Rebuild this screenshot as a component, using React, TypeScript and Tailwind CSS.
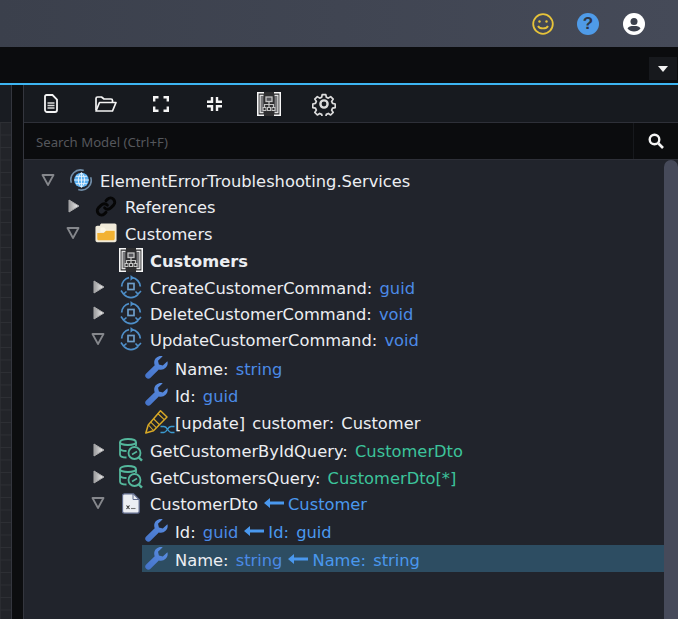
import React from "react";

const BLUE = "text-[#4b8ae6]";
const LINK = "text-[#4a98ee]";
const GREEN = "text-[#3cc39b]";

// tree icons
function Expanded() {
  return (
    <svg width="14" height="12" viewBox="0 0 14 12" fill="none">
      <path d="M1.500 1h11L7 11z" stroke="#85878c" strokeWidth="1.800" strokeLinejoin="round" />
    </svg>
  );
}

function Collapsed() {
  return (
    <svg width="12" height="14" viewBox="0 0 12 14" className="ml-[2px]">
      <defs>
        <linearGradient id="arrowFill" x1="0" x2="1" y1="0" y2="0">
          <stop offset="0" stopColor="#9a9a9c" />
          <stop offset="1" stopColor="#f4f4f4" />
        </linearGradient>
      </defs>
      <path d="M1 1v12l10-6z" fill="url(#arrowFill)" stroke="#a8a8aa" strokeWidth="1" strokeLinejoin="round" />
    </svg>
  );
}

function ServiceIcon() {
  return (
    <svg width="24" height="24" viewBox="0 0 24 24" fill="none">
      <path d="M1.500 15A10.500 10.500 0 0 1 15 1.700" stroke="#6f8ba5" strokeWidth="1.800" />
      <path d="M22.500 9A10.500 10.500 0 0 1 9 22.300" stroke="#6f8ba5" strokeWidth="1.800" />
      <circle cx="12.500" cy="12" r="8" fill="#5cb1f2" />
      <path d="M4.500 12h16M12.500 4v16M6.500 8h12M6.500 16h12M12.500 4c-4.500 4-4.500 12 0 16M12.500 4c4.500 4 4.500 12 0 16" stroke="#e8f4fd" strokeWidth="1" />
    </svg>
  );
}

function LinkIcon() {
  return (
    <svg width="25" height="25" viewBox="0 0 24 24" fill="none" stroke="#060606" strokeWidth="3.200" strokeLinecap="round">
      <path d="M10.500 13.500a4.500 4.500 0 0 0 6.600.2l3.200-3.200a4.600 4.600 0 0 0-6.500-6.500l-1.800 1.800" />
      <path d="M13.500 10.500a4.500 4.500 0 0 0-6.600-.2l-3.200 3.200a4.600 4.600 0 0 0 6.500 6.500l1.800-1.800" />
    </svg>
  );
}

function FolderIcon() {
  return (
    <svg width="24" height="22" viewBox="0 0 24 22">
      <path d="M2.500 21C1.200 21 .5 20 .5 19V5c0-1.200.8-2 2-2h3V2.500C5.500 1.200 6.500.5 7.500.5h14c1.200 0 2 .8 2 2V19c0 1.200-.8 2-2 2z" fill="#f0ead9" />
      <path d="M6 5h4l2 2.500h9.500V10H6z" fill="#fbf5e4" />
      <path d="M2.500 11h7l2.500-2.500h9.500V17c0 1-.7 2-2 2H4c-1 0-1.500-.7-1.500-2z" fill="#f2b233" />
    </svg>
  );
}

function ModelIcon() {
  return (
    <svg width="24" height="24" viewBox="0 0 24 24" fill="none" className="shrink-0">
      <rect width="24" height="24" fill="#2e2e30" />
      <path d="M7 .8H.8v22.400H7M17 .8h6.200v22.400H17" stroke="#f6f6f6" strokeWidth="1.600" />
      <path d="M6.500 3.500H3.200v17h3.300M17.500 3.500h3.300v17h-3.300" stroke="#e0e0e0" strokeWidth="1.400" />
      <rect x="3.800" y="4.200" width="2.600" height="15.600" fill="#77777a" />
      <rect x="17.600" y="4.200" width="2.600" height="15.600" fill="#77777a" />
      <rect x="9" y="5" width="6" height="4.500" fill="#55555a" stroke="#c4c4c4" strokeWidth="1.300" />
      <path d="M12 9.500v3M7.500 15.500v-3h9v3M12 12.500v3" stroke="#c4c4c4" strokeWidth="1.200" />
      <rect x="6" y="15.500" width="3" height="3" stroke="#c4c4c4" />
      <rect x="10.500" y="15.500" width="3" height="3" stroke="#c4c4c4" />
      <rect x="15" y="15.500" width="3" height="3" stroke="#c4c4c4" />
    </svg>
  );
}

function CommandIcon() {
  return (
    <svg width="22" height="24" viewBox="0 0 22 24" fill="none" stroke="#4e8fc9" strokeWidth="1.800" className="shrink-0">
      <path d="M1.700 11.500A9.500 9.500 0 0 1 9 2.700" />
      <path d="M12 2.600a9.500 9.500 0 0 1 8.300 8.900" />
      <path d="M10.500 0l3.500 2.700-3.500 3z" fill="#4e8fc9" stroke="none" />
      <path d="M1 15.500l2.500 3.500 3-2.500M21 16l-3 3-2.500-2.500" strokeWidth="1.600" />
      <path d="M4 19.500A9.500 9.500 0 0 0 18 19.500" />
      <rect x="8" y="8.500" width="6" height="6" stroke="#6d9dc8" strokeWidth="1.700" />
    </svg>
  );
}

function WrenchIcon() {
  return (
    <svg width="23" height="23" viewBox="0 0 23 23" className="shrink-0">
      <defs>
        <linearGradient id="wrenchFill" x1="0" x2="1" y1="1" y2="0">
          <stop offset="0" stopColor="#4472c8" />
          <stop offset="1" stopColor="#5c90e4" />
        </linearGradient>
      </defs>
      <path
        d="M22.400 5.200l-4.600 4.300-3.900-.9-.9-3.900L17.700.2c-3.700-.9-8.400 1.300-8.500 6.300 0 1 .2 1.900.5 2.700L1.200 17.500c-1.400 1.400-1.400 3 0 4.300s3 1.300 4.300 0l8.300-8.400c4.800 1.700 10.100-2.700 8.600-8.200z"
        fill="url(#wrenchFill)"
      />
    </svg>
  );
}

function PencilIcon() {
  return (
    <svg width="30" height="24" viewBox="0 0 30 24" fill="none" className="ml-[8px] shrink-0">
      <path d="M.8 23l2.400-8L15.500.8l6.500 6.200L8.500 20.800z" stroke="#d9a926" strokeWidth="1.500" strokeLinejoin="round" />
      <path d="M12.800 3.500l6.500 6.200M3.500 15l5 5.500M5.800 12.200l5.500 5.500M8.800 9l5.500 5.500" stroke="#d9a926" strokeWidth="1.100" />
      <path d="M15.500 22.500h3.500c3 0 3.500-6 7-6h3.500M15.500 16.500h3.500c3.500 0 4 6 7 6h3.500" stroke="#3c9ad0" strokeWidth="1.300" />
    </svg>
  );
}

function QueryIcon() {
  return (
    <svg width="24" height="24" viewBox="0 0 24 24" fill="none" stroke="#54b79c" strokeWidth="1.800" className="-ml-[1px] shrink-0">
      <ellipse cx="9" cy="4" rx="8" ry="3" />
      <path d="M1 4v12.500c0 1.800 2.800 3 6.500 3M17 4v4M1 10c0 1.800 2.800 3 6.500 3" />
      <circle cx="15.500" cy="15" r="6" fill="#21242c" />
      <path d="M13 16.500l5-3" strokeWidth="1.500" />
      <path d="M19.800 19.500l3.200 3.200" strokeWidth="2.400" />
    </svg>
  );
}

function DtoIcon() {
  return (
    <svg width="18" height="21" viewBox="0 0 18 21" fill="none" className="shrink-0">
      <path d="M2.500.8h9l5.700 5.700v11.700a2 2 0 0 1-2 2H2.500a2 2 0 0 1-2-2V2.800a2 2 0 0 1 2-2z" fill="#eceef3" stroke="#5f6a8c" strokeWidth="1.300" />
      <path d="M11 1v5.500h6" stroke="#5f6a8c" strokeWidth="1" />
      <path d="M4.500 12.500l3 3.500M7.500 12.500l-3 3.500" stroke="#333" strokeWidth="1.100" />
      <path d="M9 15.500h4.500" stroke="#777" strokeWidth="1.100" />
    </svg>
  );
}

function MapArrow() {
  return (
    <svg width="21" height="12" viewBox="0 0 21 12" className="ml-[5px] mr-[4px] inline-block align-[1px]">
      <path d="M7 1L1 6l6 5V7.500h14v-3H7z" fill="#4a98ee" />
    </svg>
  );
}

type Row = {
  depth: number;
  h: number;
  arrow?: "open" | "closed";
  icon: React.ReactNode;
  selected?: boolean;
  text: React.ReactNode;
};

const rows: Row[] = [
  { depth: 0, h: 27, arrow: "open", icon: <ServiceIcon />, text: "ElementErrorTroubleshooting.Services" },
  { depth: 1, h: 26, arrow: "closed", icon: <LinkIcon />, text: "References" },
  { depth: 1, h: 27, arrow: "open", icon: <FolderIcon />, text: "Customers" },
  { depth: 2, h: 27, icon: <ModelIcon />, text: <b className="font-bold">Customers</b> },
  { depth: 2, h: 27, arrow: "closed", icon: <CommandIcon />, text: <>CreateCustomerCommand: <span className={BLUE}>guid</span></> },
  { depth: 2, h: 25, arrow: "closed", icon: <CommandIcon />, text: <>DeleteCustomerCommand: <span className={BLUE}>void</span></> },
  { depth: 2, h: 28, arrow: "open", icon: <CommandIcon />, text: <>UpdateCustomerCommand: <span className={BLUE}>void</span></> },
  { depth: 3, h: 29, icon: <WrenchIcon />, text: <>Name: <span className={BLUE}>string</span></> },
  { depth: 3, h: 25, icon: <WrenchIcon />, text: <>Id: <span className={BLUE}>guid</span></> },
  { depth: 3, h: 29, icon: <PencilIcon />, text: "[update] customer: Customer" },
  { depth: 2, h: 27, arrow: "closed", icon: <QueryIcon />, text: <>GetCustomerByIdQuery: <span className={GREEN}>CustomerDto</span></> },
  { depth: 2, h: 27, arrow: "closed", icon: <QueryIcon />, text: <>GetCustomersQuery: <span className={GREEN}>CustomerDto[*]</span></> },
  { depth: 2, h: 26, arrow: "open", icon: <DtoIcon />, text: <>CustomerDto<MapArrow /><span className={LINK}>Customer</span></> },
  { depth: 3, h: 29, icon: <WrenchIcon />, text: <>Id: <span className={BLUE}>guid</span><MapArrow /><span className={LINK}>Id: guid</span></> },
  { depth: 3, h: 27, selected: true, icon: <WrenchIcon />, text: <>Name: <span className={BLUE}>string</span><MapArrow /><span className={LINK}>Name: string</span></> },
];

function TreeRow({ row }: { row: Row }) {
  return (
    <div className="flex items-stretch" style={{ height: row.h, paddingLeft: 16 + row.depth * 25 }}>
      <div className="flex w-4 shrink-0 items-center justify-center">
        {row.arrow === "open" && <Expanded />}
        {row.arrow === "closed" && <Collapsed />}
      </div>
      <div className={`ml-[11px] flex min-w-0 flex-1 items-center pl-[3px] ${row.selected ? "bg-[#2d4d62]" : ""}`}>
        <div className="flex w-[22px] shrink-0 items-center justify-center">{row.icon}</div>
        <div className="ml-2 whitespace-pre pt-[5px] text-[#eceef2] [word-spacing:2px]">{row.text}</div>
      </div>
    </div>
  );
}

export default function App() {
  return (
    <div className="flex h-[619px] w-[678px] flex-col overflow-hidden bg-[#21242c] font-['DejaVu_Sans',sans-serif] text-[16.300px]">
      {/* top bar */}
      <div className="flex h-[47px] shrink-0 items-center justify-end gap-[24px] bg-gradient-to-r from-[#3b404c] to-[#454a58] pr-[33px]">
        <svg width="22" height="22" viewBox="0 0 22 22" fill="none" stroke="#e6c33a" strokeWidth="1.800" className="-mr-[1px]">
          <circle cx="11" cy="11" r="9.800" />
          <circle cx="7.500" cy="8.500" r="1.200" fill="#e6c33a" stroke="none" />
          <circle cx="14.500" cy="8.500" r="1.200" fill="#e6c33a" stroke="none" />
          <path d="M6 13c1.500 3.200 8.500 3.200 10 0" />
        </svg>
        <div className="flex h-[22px] w-[22px] items-center justify-center rounded-full bg-[#4f9be8] font-['Liberation_Sans',sans-serif] text-[17px] font-bold text-[#2e3646]">
          ?
        </div>
        <svg width="22" height="22" viewBox="0 0 22 22">
          <circle cx="11" cy="11" r="11" fill="#ffffff" />
          <circle cx="11" cy="8.500" r="3.500" fill="#3b404c" />
          <path d="M4.500 15.500c1-2 3-2.500 6.500-2.500s5.500.5 6.500 2.500c-1.500 2-4 3-6.500 3s-5-1-6.500-3z" fill="#3b404c" />
        </svg>
      </div>

      {/* tab strip */}
      <div className="flex h-[36px] shrink-0 items-start justify-end bg-[#0b0c0e] pr-[1px] pt-[10px]">
        <div className="flex h-[23px] w-[28px] items-center justify-center bg-[#17191d]">
          <svg width="10" height="6" viewBox="0 0 10 6"><path d="M0 0h10L5 6z" fill="#f2f2f2" /></svg>
        </div>
      </div>
      <div className="h-[2px] shrink-0 bg-[#3db5f2]" />

      <div className="flex min-h-0 flex-1">
        {/* designer edge */}
        <div className="flex w-[12px] shrink-0 flex-col border-r border-[#34363e]">
          <div className="h-[37px] shrink-0 bg-[#191c22]" />
          <div className="flex-1 bg-[#222429] bg-[linear-gradient(#2d2f34_1px,transparent_1px),linear-gradient(90deg,#2a2c31_1px,transparent_1px)] bg-[size:12px_12.500px]" />
        </div>
        <div className="w-[12px] shrink-0 border-r border-[#34363e] bg-[#0c0d0f]" />

        <div className="flex min-w-0 flex-1 flex-col">
          {/* toolbar */}
          <div className="flex h-[38px] shrink-0 items-center border-b border-[#2e3038] bg-[#171a1f] pl-[20px] text-white">
            <svg width="14" height="19" viewBox="0 0 14 19" fill="none" stroke="#f4f4f4" strokeWidth="1.800">
              <path d="M2.500 1h6l4.500 4.500V16a2 2 0 0 1-2 2H3a2 2 0 0 1-2-2V2.500A1.500 1.500 0 0 1 2.500 1z" />
              <path d="M3.500 9h7M3.500 11.500h7M3.500 14h7" stroke="#d8d8d8" strokeWidth="1.400" />
            </svg>
            <svg className="ml-[37px]" width="22" height="16" viewBox="0 0 22 16" fill="none" stroke="#f4f4f4" strokeWidth="1.700" strokeLinejoin="round">
              <path d="M1 14V2.500C1 1.700 1.600 1 2.500 1h4l2.500 2h7c.8 0 1.500.7 1.500 1.500V6.500" />
              <path d="M1 15l3.500-8.500h16.500L17.500 15z" />
            </svg>
            <svg className="ml-[36px]" width="16" height="16" viewBox="0 0 16 16" fill="none" stroke="#f4f4f4" strokeWidth="2.400">
              <path d="M1.200 5.500V1.200h4.300M10.500 1.200h4.300v4.300M14.800 10.500v4.300h-4.300M5.500 14.800H1.200v-4.300" />
            </svg>
            <svg className="ml-[37px]" width="17" height="16" viewBox="0 0 17 16" fill="none" stroke="#f4f4f4" strokeWidth="2.400">
              <path d="M1 5.800h5V1M11 1v4.800h5M16 10.200h-5V15M6 15v-4.800H1" />
            </svg>
            <div className="ml-[34px]"><ModelIcon /></div>
            <svg className="ml-[31px]" width="24" height="24" viewBox="0 0 24 24" fill="none" stroke="#dcdcdc" strokeWidth="1.900" strokeLinejoin="round">
              <circle cx="12" cy="12" r="3.600" strokeWidth="2.400" />
              <path d="M10 1.500h4l.6 3 2.200 1 2.600-1.700 2.800 2.800-1.700 2.600 1 2.200 3 .6v4l-3 .6-1 2.200 1.700 2.600-2.800 2.800-2.600-1.700-2.200 1-.6 3h-4l-.6-3-2.200-1-2.600 1.700-2.800-2.800 1.700-2.600-1-2.200-3-.6v-4l3-.6 1-2.200-1.700-2.600 2.800-2.800 2.600 1.700 2.200-1z" transform="translate(1.200 1.200) scale(.9)" />
            </svg>
          </div>

          {/* search */}
          <div className="flex h-[37px] shrink-0 items-stretch border-b border-[#2e3038] bg-[#0b0c0e]">
            <div className="flex flex-1 items-center pl-[12px] pt-[4px] font-['Noto_Sans',sans-serif] text-[13.200px] text-[#55575c]">Search Model (Ctrl+F)</div>
            <div className="flex w-[45px] items-center justify-center border-l border-[#17191d]">
              <svg width="16" height="16" viewBox="0 0 16 16" fill="none" stroke="#f4f4f4">
                <circle cx="6.500" cy="6.500" r="4.800" strokeWidth="2.400" />
                <path d="M10.500 10.500l4.500 4.500" strokeWidth="2.600" />
              </svg>
            </div>
          </div>

          {/* tree */}
          <div className="flex min-h-0 flex-1">
            <div className="min-w-0 flex-1 pt-[6px]">
              {rows.map((row, i) => (
                <TreeRow key={i} row={row} />
              ))}
            </div>
            <div className="w-[14px] shrink-0 rounded-t-[7px] bg-[#464a5a]" />
          </div>
        </div>
      </div>
    </div>
  );
}
